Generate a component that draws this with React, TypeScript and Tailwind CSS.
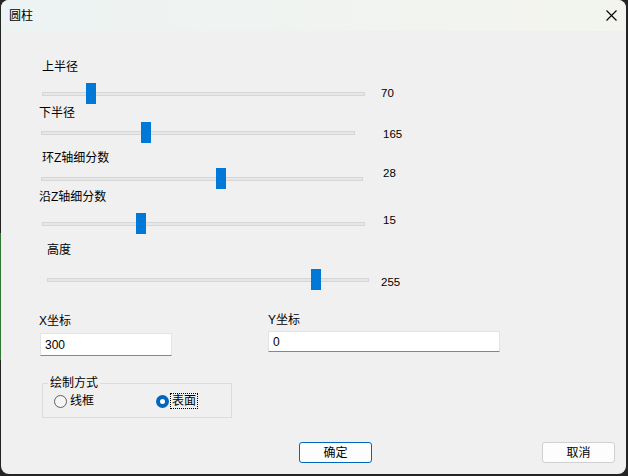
import React from 'react'

const FONT = '"Liberation Sans", "Noto Sans CJK SC", sans-serif'

type SliderSpec = {
  label: string
  value: number
  max: number
  width: number
  labelCls: string
  rowCls: string
  valueCls: string
}

const sliders: SliderSpec[] = [
  { label: '上半径', value: 70, max: 500, width: 323, labelCls: 'mt-[28px] pl-[41px]', rowCls: 'mt-[8px] pl-[41px]', valueCls: 'ml-[16px] mt-[2px]' },
  { label: '下半径', value: 165, max: 500, width: 314, labelCls: 'mt-[1px] pl-[38px]', rowCls: 'mt-[1px] pl-[40px]', valueCls: 'ml-[28px] mt-[4px]' },
  { label: '环Z轴细分数', value: 28, max: 50, width: 322, labelCls: 'mt-[7px] pl-[41px]', rowCls: 'mt-[2px] pl-[40px]', valueCls: 'ml-[20px] -mt-[3px]' },
  { label: '沿Z轴细分数', value: 15, max: 50, width: 323, labelCls: 'mt-0 pl-[38px]', rowCls: 'mt-[8px] pl-[41px]', valueCls: 'ml-[18px] -mt-[1px]' },
  { label: '高度', value: 255, max: 301, width: 322, labelCls: 'mt-[8px] pl-[46px]', rowCls: 'mt-[11px] pl-[46px]', valueCls: 'ml-[12px] mt-[5px]' },
]

function Slider({ s }: { s: SliderSpec }) {
  const left = Math.round((s.value / s.max) * (s.width - 10))
  return (
    <>
      <div className={`${s.labelCls} text-[12px] leading-[16px] text-black`}>{s.label}</div>
      <div className={`${s.rowCls} flex items-start`}>
        <div className="relative flex h-[21px] shrink-0 items-center" style={{ width: s.width }}>
          <div className="h-[4px] w-full border border-[#d6d6d6] bg-[#e7e7e7]" />
          <div className="absolute top-0 h-[21px] w-[10px] bg-[#0078d7]" style={{ left }} />
        </div>
        <span className={`${s.valueCls} text-[11.5px] leading-[16px] text-black`}>{s.value}</span>
      </div>
    </>
  )
}

function Radio({ checked }: { checked: boolean }) {
  return checked ? (
    <span className="flex h-[13px] w-[13px] items-center justify-center rounded-full bg-[#0067c0]">
      <span className="h-[5px] w-[5px] rounded-full bg-white" />
    </span>
  ) : (
    <span className="h-[13px] w-[13px] rounded-full border border-[#5f5f5f] bg-[#f5f5f5]" />
  )
}

export default function App() {
  return (
    <div className="flex h-[476px] w-[628px] bg-[#242424]" style={{ fontFamily: FONT }}>
      <div className="flex w-[1px] shrink-0 flex-col">
        <div className="h-[233px] bg-[#242424]" />
        <div className="h-[127px] bg-[#317531]" />
      </div>

      <div className="flex h-[474px] w-[625px] flex-col overflow-hidden rounded-[8px] bg-[#f0f0f0]">
        <div className="flex h-[31px] shrink-0 items-center justify-between bg-gradient-to-r from-[#edf3f3] to-[#f3f4ee] pl-[8px] pr-[9px]">
          <span className="text-[12px] leading-[16px] text-black">圆柱</span>
          <svg width="11" height="11" viewBox="0 0 11 11">
            <path d="M0.5 0.5 L10.5 10.5 M10.5 0.5 L0.5 10.5" stroke="#000" strokeWidth="1.1" fill="none" />
          </svg>
        </div>

        {sliders.map(s => (
          <Slider key={s.label} s={s} />
        ))}

        <div className="mt-[22px] flex items-start pl-[38px] text-[12px] leading-[16px] text-black">
          <div className="flex w-[229px] shrink-0 flex-col pt-[1px]">
            <span>X坐标</span>
            <div className="ml-[1px] mt-[4px] flex h-[23px] w-[132px] items-center border border-[#e3e3e3] border-b-[#868686] bg-white pl-[4px]">
              300
            </div>
          </div>
          <div className="flex flex-col">
            <span>Y坐标</span>
            <div className="mt-[3px] flex h-[21px] w-[232px] items-center border border-[#e3e3e3] border-b-[#868686] bg-white pl-[4px]">
              0
            </div>
          </div>
        </div>

        <fieldset className="ml-[41px] mt-[19px] w-[190px] border border-[#dcdcdc] pb-[8px] text-[12px] leading-[16px] text-black">
          <legend className="ml-[5px] px-[2px]">绘制方式</legend>
          <div className="mt-[2px] flex h-[16px] items-center pl-[11px]">
            <div className="flex w-[102px] items-center gap-[3px]">
              <Radio checked={false} />
              <span>线框</span>
            </div>
            <div className="flex items-center gap-[1px]">
              <Radio checked />
              <span className="border border-dotted border-black px-[1px] leading-[14px]">表面</span>
            </div>
          </div>
        </fieldset>

        <div className="mt-[24px] flex pl-[298px] text-[12px] text-black">
          <button className="h-[21px] w-[73px] rounded-[3px] border border-[#0067c0] bg-[#fdfdfd] leading-[16px]">确定</button>
          <button className="ml-[170px] h-[21px] w-[73px] rounded-[3px] border border-[#d0d0d0] bg-[#fdfdfd] leading-[16px]">取消</button>
        </div>
      </div>
    </div>
  )
}
